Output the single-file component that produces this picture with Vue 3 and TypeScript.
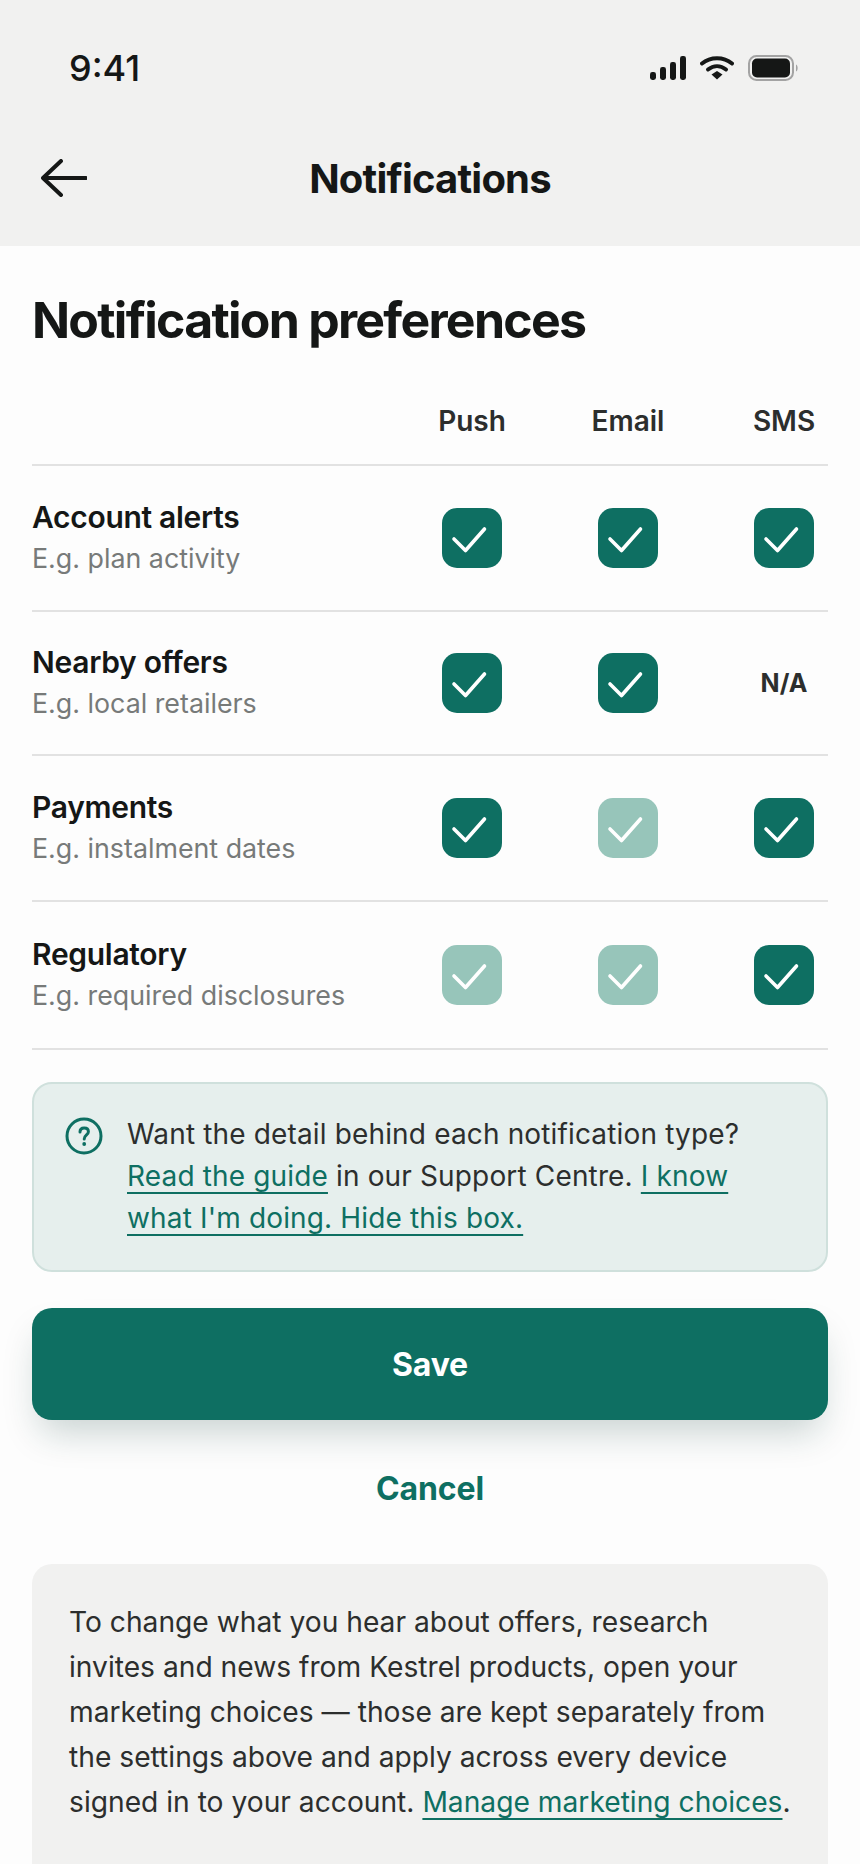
<template>
  <div class="screen">
    <header class="top">
      <div class="status-bar">
        <span class="time">9:41</span>
        <div class="status-icons">
          <svg width="36" height="24" viewBox="0 0 36 24">
            <rect x="0" y="16" width="6" height="8" rx="2.4" />
            <rect x="10" y="11" width="6" height="13" rx="2.4" />
            <rect x="20" y="6" width="6" height="18" rx="2.4" />
            <rect x="30" y="0" width="6" height="24" rx="2.4" />
          </svg>
          <svg width="34" height="24" viewBox="0 0 34 24">
            <path d="M2 7.500C10.500 0.500 23.500 0.500 32 7.500" class="wifi" />
            <path d="M8 13.500C13.500 9 20.500 9 26 13.500" class="wifi" />
            <path d="M11.500 18.500L17 15L22.500 18.500L17 23.500Z" />
          </svg>
          <svg width="51" height="26" viewBox="0 0 51 26">
            <rect x="1" y="1" width="44" height="24" rx="7.500" class="batt-frame" />
            <rect x="4" y="3.500" width="38" height="19" rx="5" />
            <path d="M48 9.500C50.200 10.500 50.200 15.500 48 16.500Z" fill="#a3a3a3" />
          </svg>
        </div>
      </div>
      <div class="nav-bar">
        <button class="back" aria-label="Back">
          <svg width="46" height="38" viewBox="0 0 46 38">
            <path d="M20 2L2 19L20 36M2 19H45" />
          </svg>
        </button>
        <h1 class="nav-title">Notifications</h1>
      </div>
    </header>

    <main class="content">
      <h2 class="page-title">Notification preferences</h2>

      <div class="table">
        <div class="head-row">
          <span></span>
          <span v-for="c in channels" :key="c" class="col-label">{{ c }}</span>
        </div>
        <div v-for="row in rows" :key="row.title" class="row">
          <div class="row-text">
            <div class="row-title">{{ row.title }}</div>
            <div class="row-sub">{{ row.sub }}</div>
          </div>
          <div v-for="(cell, i) in row.cells" :key="i" class="cell">
            <span v-if="cell === 'na'" class="na">N/A</span>
            <span v-else class="check" :class="{ locked: cell === 'locked' }">
              <svg width="60" height="60" viewBox="0 0 60 60">
                <path d="M12 31L23.500 42.500L42.500 21" />
              </svg>
            </span>
          </div>
        </div>
      </div>

      <div class="callout">
        <svg class="help" width="38" height="38" viewBox="0 0 38 38">
          <circle cx="19" cy="19" r="17" class="help-ring" />
          <path d="M15 15C15 12.500 16.800 11 19.200 11C21.600 11 23.400 12.400 23.400 14.700C23.400 17.800 19.200 18 19.200 22" class="help-ring" />
          <circle cx="19.200" cy="27" r="1.900" class="help-dot" />
        </svg>
        <p>
          Want the detail behind each notification type?
          <a class="link" href="#">Read the guide</a> in our Support Centre.
          <a class="link" href="#">I know what I'm doing. Hide this box.</a>
        </p>
      </div>

      <button class="save">Save</button>
      <button class="cancel">Cancel</button>

      <div class="footnote">
        To change what you hear about offers, research<br />
        invites and news from Kestrel products, open your marketing choices — those are kept separately from the settings above and apply across every device signed in to your account.
        <a class="link" href="#">Manage marketing choices</a>.
      </div>
    </main>
  </div>
</template>

<script setup lang="ts">
type Cell = 'on' | 'locked' | 'na'

interface Row {
  title: string
  sub: string
  cells: Cell[]
}

const channels = ['Push', 'Email', 'SMS']

const rows: Row[] = [
  { title: 'Account alerts', sub: 'E.g. plan activity', cells: ['on', 'on', 'on'] },
  { title: 'Nearby offers', sub: 'E.g. local retailers', cells: ['on', 'on', 'na'] },
  { title: 'Payments', sub: 'E.g. instalment dates', cells: ['on', 'locked', 'on'] },
  { title: 'Regulatory', sub: 'E.g. required disclosures', cells: ['locked', 'locked', 'on'] }
]
</script>

<style>
html,
body {
  margin: 0;
  background: #fff;
}
</style>

<style scoped>
.screen {
  width: 860px;
  height: 1864px;
  overflow: hidden;
  display: flex;
  flex-direction: column;
  font-family: Inter, "Liberation Sans", sans-serif;
  color: #151716;
  background: #fdfdfd;
}

.top {
  background: #f1f1f0;
  height: 246px;
  flex: none;
}

.status-bar {
  display: flex;
  justify-content: space-between;
  align-items: center;
  padding: 48px 61px 0 69px;
  height: 40px;
}

.time {
  font-size: 36px;
  font-weight: 550;
  line-height: 40px;
}

.status-icons {
  display: flex;
  align-items: center;
  gap: 14px;
}

.status-icons svg {
  fill: #151716;
}

.wifi {
  fill: none;
  stroke: #151716;
  stroke-width: 4;
  stroke-linecap: round;
}

.batt-frame {
  fill: none;
  stroke: #a3a3a3;
  stroke-width: 2;
}

.nav-bar {
  position: relative;
  display: flex;
  justify-content: center;
  align-items: center;
  margin-top: 65px;
  height: 52px;
}

.back {
  position: absolute;
  left: 41px;
  top: 6px;
  padding: 0;
  border: none;
  background: none;
  line-height: 0;
}

.back path {
  fill: none;
  stroke: #151716;
  stroke-width: 4;
  stroke-linecap: round;
  stroke-linejoin: round;
}

.nav-title {
  margin: 0;
  font-size: 40px;
  font-weight: 700;
  letter-spacing: -0.8px;
  line-height: 52px;
}

.content {
  flex: 1;
  display: flex;
  flex-direction: column;
  padding: 44px 32px 0;
  min-height: 0;
}

.page-title {
  flex: none;
  margin: 0;
  font-size: 50px;
  font-weight: 700;
  letter-spacing: -1.75px;
  line-height: 60px;
}

.table {
  flex: none;
  margin-top: 43px;
}

.head-row,
.row {
  display: grid;
  grid-template-columns: 1fr 88px 88px 88px;
  column-gap: 68px;
  align-items: center;
  border-bottom: 2px solid #e2e2e2;
}

.head-row {
  height: 73px;
  padding-bottom: 16px;
  box-sizing: border-box;
}

.col-label {
  text-align: center;
  font-size: 28px;
  font-weight: 600;
  color: #2c2e2d;
}

.row {
  height: 146px;
  box-sizing: border-box;
}

.row:nth-child(3) {
  height: 144px;
}

.row:nth-child(5) {
  height: 148px;
}

.row-title {
  font-size: 30px;
  font-weight: 600;
  letter-spacing: -0.3px;
  line-height: 38px;
  margin-bottom: 2px;
}

.row-sub {
  font-size: 26.8px;
  line-height: 40px;
  color: #777a79;
}

.cell {
  display: flex;
  justify-content: center;
}

.check {
  width: 60px;
  height: 60px;
  border-radius: 15px;
  background: #0e6f62;
  display: flex;
}

.check.locked {
  background: #97c5ba;
}

.check path {
  fill: none;
  stroke: #fff;
  stroke-width: 3.6;
  stroke-linecap: round;
  stroke-linejoin: round;
}

.na {
  font-size: 25px;
  font-weight: 700;
  color: #2c2e2d;
}

.callout {
  flex: none;
  margin-top: 32px;
  height: 190px;
  box-sizing: border-box;
  padding: 29px 32px 0 31px;
  display: flex;
  gap: 24px;
  border: 2px solid #cfe0dc;
  border-radius: 20px;
  background: #e6efed;
}

.help {
  flex: none;
  margin-top: 4px;
}

.help-ring {
  fill: none;
  stroke: #0e6f62;
  stroke-width: 3;
  stroke-linecap: round;
}

.help-dot {
  fill: #0e6f62;
}

.callout p {
  margin: 0;
  font-size: 28px;
  letter-spacing: 0.15px;
  line-height: 42px;
  color: #2c2e2d;
}

.link {
  color: #0e6f62;
  text-decoration: underline;
  text-decoration-thickness: 2px;
  text-underline-offset: 6px;
  text-decoration-skip-ink: none;
}

.save {
  margin-top: 36px;
  flex: none;
  height: 112px;
  border: none;
  border-radius: 20px;
  background: #0e6f62;
  color: #fff;
  font: 700 32px Inter, "Liberation Sans", sans-serif;
  letter-spacing: -0.2px;
  box-shadow: 0 20px 36px -8px rgba(15, 60, 55, 0.22);
}

.cancel {
  margin-top: 39px;
  flex: none;
  height: 58px;
  border: none;
  background: none;
  color: #0e6f62;
  font: 700 32px Inter, "Liberation Sans", sans-serif;
  letter-spacing: -0.1px;
}

.footnote {
  margin-top: 47px;
  flex: none;
  height: 420px;
  padding: 36px 30px 0 37px;
  background: #f1f1f0;
  border-radius: 20px;
  font-size: 28.2px;
  line-height: 45px;
  color: #2c2e2d;
}
</style>
